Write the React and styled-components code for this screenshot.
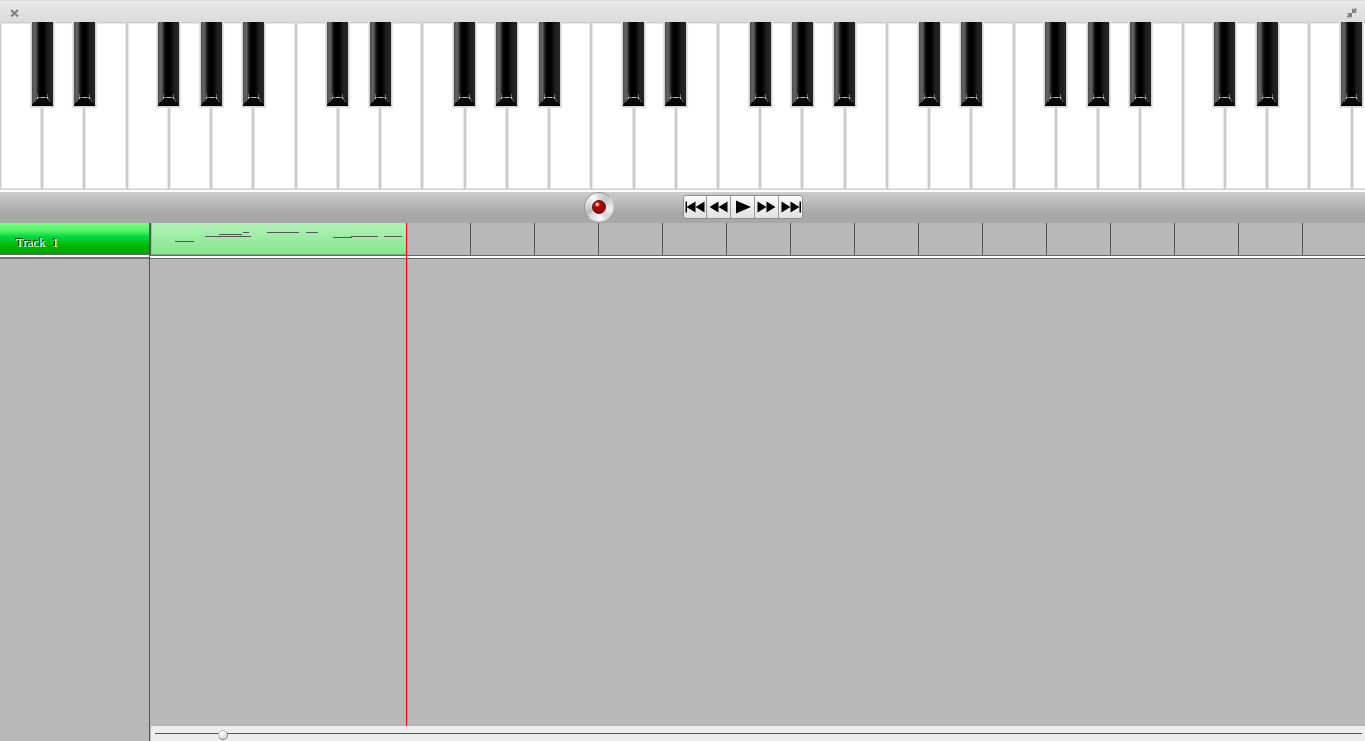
import React, { useState } from 'react';
import styled, { createGlobalStyle } from 'styled-components';

const GlobalStyle = createGlobalStyle`
  * {
    box-sizing: border-box;
  }
  body {
    margin: 0;
    background: #b8b8b8;
    font-family: "Liberation Serif", "Times New Roman", serif;
  }
  button {
    margin: 0;
    padding: 0;
    border: 0;
    background: none;
    cursor: pointer;
  }
`;

const Container = styled.div`
  display: flex;
  flex-direction: column;
  height: 100vh;
  overflow: hidden;
`;

const TitleBar = styled.header`
  display: flex;
  flex: none;
  justify-content: space-between;
  align-items: flex-end;
  height: 22px;
  padding: 0 8px 4px 10px;
  background: linear-gradient(#e7e7e7, #dcdcdc);
  border-top: 1px solid #dedede;
`;

const TitleButton = styled.button`
  display: flex;

  svg {
    display: block;
  }
`;

const Keyboard = styled.div`
  display: flex;
  flex: none;
  height: 168px;
  overflow: hidden;
  background: #fff;
`;

const KeySlot = styled.div`
  position: relative;
  flex: 0 0 3.095%;
`;

const WhiteKey = styled.button`
  display: block;
  width: 100%;
  height: 168px;
  background: #fff;
  border: 1px solid #cbcbcb;
  box-shadow: inset 0 0 0 1px #e8e8e8;

  &:active {
    background: #eee;
  }
`;

const BlackKey = styled.button`
  position: absolute;
  z-index: 1;
  top: 0;
  left: 72.8%;
  width: 23px;
  height: 85px;
  border: 1px solid #d0d0d0;
  border-top: 0;
  background: linear-gradient(
    90deg,
    #505050 0,
    #636363 3px,
    #585858 4px,
    #1c1c1c 6px,
    #000 8px,
    #000 12px,
    #1e1e1e 16px,
    #262626 100%
  );
  box-shadow: 0 0 1px 1px #e6e6e6;
  clip-path: inset(0 -2px -2px -2px);

  svg {
    position: absolute;
    left: 0;
    bottom: 0;
  }
`;

const Toolbar = styled.div`
  display: grid;
  flex: none;
  grid-template-columns: 1fr 1fr;
  align-items: center;
  height: 33px;
  padding-bottom: 1px;
  border-top: 2px solid #fff;
  background: linear-gradient(#cdcdcd, #a7a7a7 70%, #a7a7a7);
`;

const RecordArea = styled.div`
  display: flex;
  justify-content: flex-end;
  padding-right: 69px;
`;

const RecordButton = styled.button`
  display: flex;
  align-items: center;
  justify-content: center;
  width: 30px;
  height: 30px;
  border: 1px solid #999;
  border-right-color: #ccc;
  border-bottom-color: #ccc;
  border-radius: 50%;
  background: conic-gradient(
    #d8d8d8,
    #c6c6c6 12%,
    #f2f2f2 28%,
    #d4d4d4 38%,
    #f8f8f8 48%,
    #e0e0e0 60%,
    #bcbcbc 68%,
    #e8e8e8 84%,
    #fafafa 92%,
    #d8d8d8
  );
`;

const RecordLight = styled.span`
  width: 14px;
  height: 14px;
  border: 1px solid #5a1010;
  border-radius: 50%;
  background: radial-gradient(circle at 35% 28%, #fbdcdc 0, #f0a0a0 10%, #b80000 24%, #a40000 55%, #690000 100%);
`;

const Transport = styled.div`
  display: flex;
  justify-self: start;
  height: 24px;
  border: 1px solid #8e8e8e;
  border-radius: 3px;
  overflow: hidden;
`;

const TransportButton = styled.button`
  display: flex;
  align-items: center;
  width: ${(props) => (props.$first ? '22px' : '24px')};
  padding-left: 1px;
  border-left: ${(props) => (props.$first ? '0' : '1px solid #999')};
  background: linear-gradient(#fafafa, #e2e2e2);

  svg {
    display: block;
    flex: none;
  }
`;

const Workspace = styled.div`
  display: grid;
  flex: 1;
  grid-template-columns: 150px 1fr;
  min-height: 0;
`;

const TrackList = styled.aside`
  border-right: 1px solid #555;
`;

const TrackHeader = styled.div`
  height: 36px;
  border-bottom: 2px solid #747474;
  background: #fff;
`;

const TrackName = styled.div`
  height: 32px;
  padding: 8px 16px 0;
  border-bottom: 1px solid #666;
  background: linear-gradient(#74ff80 0, #52f368 25%, #00d840 45%, #00c81c 60%, #00b400 75%, #00a800 100%);
  color: #fff;
  font-size: 13px;
  line-height: 24px;
  text-shadow: -1px -1px 0 #000;
  white-space: pre;
`;

const Timeline = styled.main`
  position: relative;
  display: flex;
  flex-direction: column;
  min-width: 0;
`;

const Lane = styled.div`
  height: 36px;
  border-bottom: 1px solid #666;
  background: #fff;
`;

const LaneGrid = styled.div`
  height: 33px;
  padding-left: 1px;
  border-bottom: 1px solid #666;
  background: repeating-linear-gradient(90deg, #555 0, #555 1px, #b8b8b8 1px, #b8b8b8 64px);
`;

const Clip = styled.div`
  width: 256px;
  height: 32px;
  border: 1px solid #8fc795;
  border-top-color: #c4e8c6;
  border-bottom-color: #6fb478;
  border-radius: 3px;
  background: linear-gradient(#b1f2b5, #84e68e);

  svg {
    display: block;
  }
`;

const LaneSpace = styled.div`
  flex: 1;
`;

const Playhead = styled.div`
  position: absolute;
  top: 0;
  bottom: 15px;
  width: 1px;
  background: #f00;
`;

const ZoomBar = styled.div`
  display: flex;
  height: 15px;
  margin-left: 1px;
  padding: 0 3px 0 4px;
  background: #ededed;
`;

const ZoomSlider = styled.input`
  appearance: none;
  width: 100%;
  height: 15px;
  margin: 0;
  background: linear-gradient(#555, #555) 0 7px / 100% 1px no-repeat;

  &::-webkit-slider-thumb {
    appearance: none;
    width: 10px;
    height: 10px;
    margin-top: 2px;
    border: 1px solid #c4c4c4;
    border-right-color: #8c8c8c;
    border-bottom-color: #777;
    border-radius: 50%;
    background: radial-gradient(circle at 35% 30%, #fff, #cacaca);
  }
`;

// offsets inside an octave that have a black key on their right
const SHARPS = [0, 1, 3, 4, 5];
const NOTE_NAMES = ['C', 'D', 'E', 'F', 'G', 'A', 'B'];
const WHITE_KEYS = Array.from({ length: 33 }, (_, i) => i);

const BAR_WIDTH = 64;

const notes = [
  { x: 23, y: 17, length: 19 },
  { x: 53, y: 12, length: 46 },
  { x: 67, y: 10, length: 23 },
  { x: 91, y: 8, length: 6 },
  { x: 115, y: 8, length: 32 },
  { x: 154, y: 8, length: 12 },
  { x: 181, y: 13, length: 19 },
  { x: 199, y: 12, length: 27 },
  { x: 232, y: 12, length: 18 },
];

const transportButtons = [
  { label: 'Go to start', path: 'M.500 1.500H2v11H.500zM1.500 7l9-5.500v11zM10.500 7l9-5.500v11z' },
  { label: 'Rewind', path: 'M1.500 7l9-5.500v11zM10.500 7l9-5.500v11z' },
  { label: 'Play', path: 'M4 .500l15 6.500-15 6.500z' },
  { label: 'Fast forward', path: 'M1.500 1.500l9 5.500-9 5.500zM10.500 1.500l9 5.500-9 5.500z' },
  { label: 'Go to end', path: 'M1.500 1.500l9 5.500-9 5.500zM10.500 1.500l9 5.500-9 5.500zM19.500 1.500H21v11h-1.500z' },
];

const KeyBevel = () => (
  <svg width="21" height="12" viewBox="0 0 21 12">
    <path d="M5 4L0 11v1h21v-1l-5-7z" fill="#060606" />
    <path d="M5.500 0v3L3 8M15.500 0v3L18 8" stroke="#666" fill="none" />
    <path d="M5 3.500h11" stroke="#777" />
    <path d="M9 3.500h4" stroke="#bbb" />
    <path d="M5 3h1v2H5zM15 3h1v2h-1z" fill="#bbb" />
  </svg>
);

const CloseIcon = () => (
  <svg width="9" height="9" viewBox="0 0 9 9">
    <path d="M1 1l7 6.500M8 1L1 7.500" stroke="#808080" strokeWidth="2.200" fill="none" />
  </svg>
);

const ShrinkIcon = () => (
  <svg width="10" height="10" viewBox="0 0 10 10">
    <path d="M5 0v5h5L8.500 3.500 10 1.500 8.500 0 6.500 1.500z" fill="#808080" />
    <path d="M5 10V5H0l1.500 1.500L0 8.500 1.500 10l2-1.500z" fill="#808080" />
  </svg>
);

const Piano = () => (
  <Keyboard>
    {WHITE_KEYS.map((i) => (
      <KeySlot key={i}>
        <WhiteKey aria-label={NOTE_NAMES[i % 7]} />
        {SHARPS.includes(i % 7) && (
          <BlackKey aria-label={`${NOTE_NAMES[i % 7]} sharp`}>
            <KeyBevel />
          </BlackKey>
        )}
      </KeySlot>
    ))}
  </Keyboard>
);

const App = () => {
  const [zoom, setZoom] = useState(53);

  return (
    <Container>
      <GlobalStyle />
      <TitleBar>
        <TitleButton aria-label="Close">
          <CloseIcon />
        </TitleButton>
        <TitleButton aria-label="Shrink">
          <ShrinkIcon />
        </TitleButton>
      </TitleBar>
      <Piano />
      <Toolbar>
        <RecordArea>
          <RecordButton aria-label="Record">
            <RecordLight />
          </RecordButton>
        </RecordArea>
        <Transport>
          {transportButtons.map((button, i) => (
            <TransportButton key={button.label} $first={i === 0} aria-label={button.label}>
              <svg width="21" height="14" viewBox="0 0 21 14">
                <path d={button.path} />
              </svg>
            </TransportButton>
          ))}
        </Transport>
      </Toolbar>
      <Workspace>
        <TrackList>
          <TrackHeader>
            <TrackName>{'Track  1'}</TrackName>
          </TrackHeader>
        </TrackList>
        <Timeline>
          <Lane>
            <LaneGrid>
              <Clip>
                <svg width="254" height="30">
                  {notes.map((note) => (
                    <rect key={note.x} x={note.x} y={note.y} width={note.length} height="1" fill="#555" />
                  ))}
                </svg>
              </Clip>
            </LaneGrid>
          </Lane>
          <LaneSpace />
          <ZoomBar>
            <ZoomSlider
              type="range"
              min="0"
              max="1000"
              value={zoom}
              aria-label="Zoom"
              onChange={(e) => setZoom(Number(e.target.value))}
            />
          </ZoomBar>
          <Playhead style={{ left: BAR_WIDTH * 4 }} />
        </Timeline>
      </Workspace>
    </Container>
  );
};

export default App;
